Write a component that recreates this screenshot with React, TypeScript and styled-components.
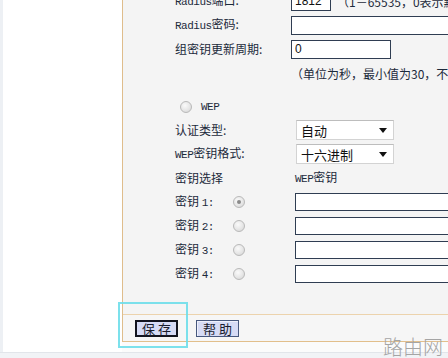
import styled, { createGlobalStyle } from "styled-components";

export default function App() {
  return (
    <>
      <GlobalStyle />
      <SPage>
        <STop>
          <SStrip />
          <SSidebar />
          <SContent>
            <SPanel>
              <SForm>
                <SFormInner>
                  <SRow $cols="116px 1fr">
                    <SLabel>
                      <SLatin children="Radius" />端口:
                    </SLabel>
                    <SInline>
                      <STextInput $width={40} defaultValue="1812" readOnly />
                      <SNote children="（1－65535，0表示默认端口：1812）" />
                    </SInline>
                  </SRow>
                  <SRow $cols="116px 1fr">
                    <SLabel>
                      <SLatin children="Radius" />密码:
                    </SLabel>
                    <STextInput $width={200} defaultValue="" readOnly />
                  </SRow>
                  <SRow $cols="116px 1fr">
                    <SLabel children="组密钥更新周期:" />
                    <STextInput $width={100} defaultValue="0" readOnly />
                  </SRow>
                  <SRow $cols="116px 1fr">
                    <span />
                    <SNote children="（单位为秒，最小值为30，不更新则为0）" />
                  </SRow>
                  <SSpacer />
                  <SRow $cols="1fr" $height={22}>
                    <SRadioLabel>
                      <SRadio />
                      <SLatin children="WEP" />
                    </SRadioLabel>
                  </SRow>
                  <SRow $cols="121px 1fr">
                    <SLabel children="认证类型:" />
                    <SSelect>
                      <span children="自动" />
                      <SCaret />
                    </SSelect>
                  </SRow>
                  <SRow $cols="121px 1fr">
                    <SLabel>
                      <SLatin children="WEP" />密钥格式:
                    </SLabel>
                    <SSelect>
                      <span children="十六进制" />
                      <SCaret />
                    </SSelect>
                  </SRow>
                  <SRow $cols="120px 1fr">
                    <SLabel children="密钥选择" />
                    <SLabel>
                      <SLatin children="WEP" />密钥
                    </SLabel>
                  </SRow>
                  {[1, 2, 3, 4].map((n) => (
                    <SRow key={n} $cols="58px 62px 1fr">
                      <SLabel>
                        密钥 <SLatin children={n + ":"} />
                      </SLabel>
                      <SRadio $checked={n === 1} />
                      <STextInput $width={200} $height={18} defaultValue="" readOnly />
                    </SRow>
                  ))}
                </SFormInner>
              </SForm>
              <SButtonBar>
                <SButton $focused children="保 存" />
                <SButton children="帮 助" />
              </SButtonBar>
            </SPanel>
          </SContent>
        </STop>
        <SBottomBand />
        <SSelectionBox />
        <SWatermark children="路由网" />
      </SPage>
    </>
  );
}

// #region Styles

const GlobalStyle = createGlobalStyle`
  *, *::before, *::after { box-sizing: border-box; }
  html, body { margin: 0; padding: 0; background: #fff; }
  body {
    width: 448px;
    height: 358px;
    overflow: hidden;
    font-family: "Noto Sans CJK SC", "Liberation Sans", sans-serif;
  }
`;

const SPage = styled.div`
  position: relative;
  display: flex;
  flex-direction: column;
  width: 448px;
  height: 358px;
  overflow: hidden;
  background: #fff;
`;

const STop = styled.div`
  display: flex;
  height: 352px;
`;

const SStrip = styled.div`
  width: 3px;
  flex-shrink: 0;
  background: #edf0f4;
`;

const SSidebar = styled.div`
  width: 119px;
  flex-shrink: 0;
  background: #fff;
`;

const SContent = styled.div`
  flex: 1;
  min-width: 0;
  background: #fbfbfb;
`;

const SPanel = styled.div`
  display: flex;
  flex-direction: column;
  width: 340px;
  height: 342px;
  background: #f4f4f4;
  border-left: 1px solid #dfbd8c;
  border-bottom: 1px solid #e2bf8c;
`;

const SForm = styled.div`
  height: 315px;
  flex-shrink: 0;
  padding-left: 52px;
  overflow: hidden;
  border-bottom: 1px solid #ecd3ad;
`;

const SFormInner = styled.div`
  display: flex;
  flex-direction: column;
  margin-top: -11px;
`;

const SRow = styled.div<{ $cols: string; $height?: number }>`
  display: grid;
  grid-template-columns: ${(p) => p.$cols};
  align-items: center;
  height: ${(p) => p.$height ?? 24}px;
  white-space: nowrap;
`;

const SSpacer = styled.div`
  height: 11px;
`;

const SLabel = styled.span`
  font-size: 12px;
  line-height: 14px;
  color: #1c2a3b;
`;

const SLatin = styled.span`
  font-family: "Liberation Mono", monospace;
  font-size: 11px;
  letter-spacing: -0.5px;
  color: #1c2a3b;
`;

const SInline = styled.div`
  display: flex;
  align-items: center;
  gap: 6px;
`;

const SNote = styled.span`
  font-size: 12px;
  color: #1c2a3b;
  white-space: nowrap;
`;

const STextInput = styled.input.attrs({ type: "text" })<{ $width: number; $height?: number }>`
  width: ${(p) => p.$width}px;
  height: ${(p) => p.$height ?? 19}px;
  padding: 0 3px;
  border: 1px solid #2f3d52;
  background: #fff;
  font-family: "Liberation Sans", sans-serif;
  font-size: 12px;
  color: #111;
  outline: none;
`;

const SSelect = styled.div`
  display: flex;
  align-items: center;
  justify-content: space-between;
  width: 98px;
  height: 20px;
  padding: 0 6px 0 4px;
  background: #fff;
  border: 1px solid #d3d3d3;
  border-top-color: #bdbdbd;
  font-size: 13px;
  color: #111;
`;

const SCaret = styled.span`
  width: 0;
  height: 0;
  border-left: 4px solid transparent;
  border-right: 4px solid transparent;
  border-top: 5px solid #111;
`;

const SRadioLabel = styled.span`
  display: inline-flex;
  align-items: center;
  gap: 9px;
  padding-left: 5px;
`;

const SRadio = styled.span<{ $checked?: boolean }>`
  position: relative;
  display: inline-block;
  width: 12px;
  height: 12px;
  border-radius: 50%;
  border: 1px solid #b9b9b9;
  background: radial-gradient(circle at 40% 35%, #fafafa 0%, #e6e6e6 55%, #d2d2d2 100%);

  &::after {
    content: "";
    display: ${(p) => (p.$checked ? "block" : "none")};
    position: absolute;
    left: 3px;
    top: 3px;
    width: 4px;
    height: 4px;
    border-radius: 50%;
    background: #8a8a8a;
  }
`;

const SButtonBar = styled.div`
  display: flex;
  align-items: center;
  gap: 18px;
  height: 26px;
  padding-left: 12px;
  background: #f6f6f6;
`;

const SButton = styled.button.attrs({ type: "button" })<{ $focused?: boolean }>`
  width: 43px;
  height: 17px;
  padding: 0;
  display: flex;
  align-items: center;
  justify-content: center;
  font-family: "Noto Sans CJK SC", sans-serif;
  font-size: 13px;
  line-height: 1;
  color: #1a1d2e;
  background: #d6dbf5;
  border: ${(p) => (p.$focused ? "2px solid #12141f" : "1px solid #47587e")};
  box-shadow: ${(p) => (p.$focused ? "none" : "inset 1px 1px 0 #eef0fb")};
`;

const SBottomBand = styled.div`
  flex: 1;
  background: #f1f3f6;
  border-top: 1px solid #e2e5ea;
`;

const SSelectionBox = styled.div`
  position: absolute;
  left: 118px;
  top: 302px;
  width: 70px;
  height: 46px;
  border: 2px solid rgba(110, 222, 234, 0.9);
  pointer-events: none;
`;

const SWatermark = styled.div`
  position: absolute;
  right: 5px;
  bottom: 0;
  font-family: "Noto Sans CJK SC", sans-serif;
  font-size: 20px;
  line-height: 22px;
  font-weight: 300;
  color: #a5a5a5;
`;

// #endregion
